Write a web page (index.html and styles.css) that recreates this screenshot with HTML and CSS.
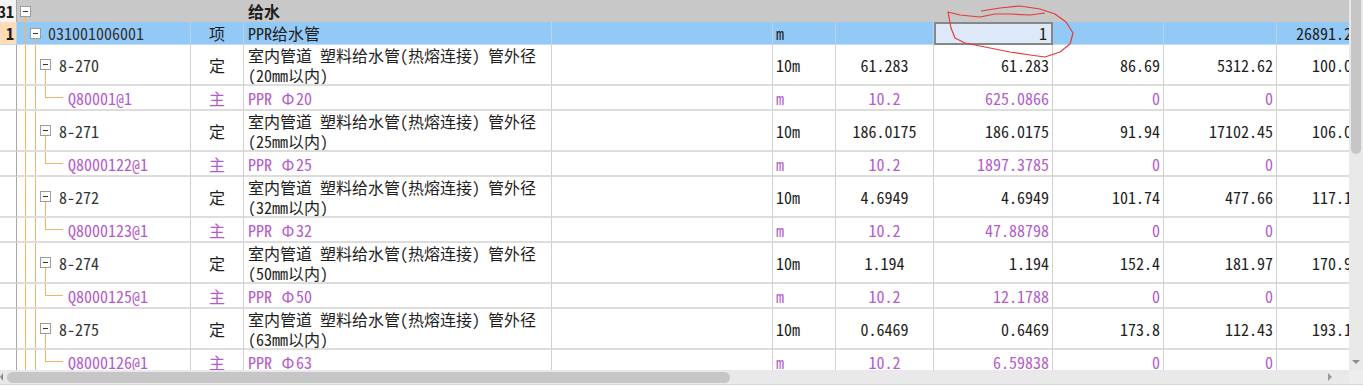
FILE: index.html
```html
<!DOCTYPE html>
<html lang="zh-CN">
<head>
  <meta charset="UTF-8" />
  <title>分部分项</title>
  <link rel="stylesheet" href="styles.css">
</head>
<body>
  <div class="main">
    <div class="sheet">
      <div class="row grp">
        <div class="c num">31</div>
        <div class="c code lv0"><i class="box"></i></div>
        <div class="c"></div>
        <div class="c name bold">给水</div>
        <div class="c"></div><div class="c"></div><div class="c"></div><div class="c"></div><div class="c"></div><div class="c"></div><div class="c"></div>
      </div>

      <div class="row top">
        <div class="c num cur">1</div>
        <div class="c code lv1"><i class="box"></i>031001006001</div>
        <div class="c mid">项</div>
        <div class="c name">PPR给水管</div>
        <div class="c"></div>
        <div class="c">m</div>
        <div class="c"></div>
        <div class="c r edit">1</div>
        <div class="c"></div>
        <div class="c"></div>
        <div class="c r">26891.27</div>
      </div>

      <div class="row def">
        <div class="c num"></div>
        <div class="c code lv2"><i class="box"></i>8-270</div>
        <div class="c mid">定</div>
        <div class="c name">室内管道 塑料给水管(热熔连接) 管外径<br>(20mm以内)</div>
        <div class="c"></div>
        <div class="c">10m</div>
        <div class="c mid">61.283</div>
        <div class="c r">61.283</div>
        <div class="c r">86.69</div>
        <div class="c r">5312.62</div>
        <div class="c r">100.04</div>
      </div>
      <div class="row mat">
        <div class="c num"></div>
        <div class="c code lv3">Q80001@1</div>
        <div class="c mid">主</div>
        <div class="c name">PPR&nbsp;<span class="phi">Φ</span>20</div>
        <div class="c"></div>
        <div class="c">m</div>
        <div class="c mid">10.2</div>
        <div class="c r">625.0866</div>
        <div class="c r">0</div>
        <div class="c r">0</div>
        <div class="c"></div>
      </div>

      <div class="row def">
        <div class="c num"></div>
        <div class="c code lv2"><i class="box"></i>8-271</div>
        <div class="c mid">定</div>
        <div class="c name">室内管道 塑料给水管(热熔连接) 管外径<br>(25mm以内)</div>
        <div class="c"></div>
        <div class="c">10m</div>
        <div class="c mid">186.0175</div>
        <div class="c r">186.0175</div>
        <div class="c r">91.94</div>
        <div class="c r">17102.45</div>
        <div class="c r">106.05</div>
      </div>
      <div class="row mat">
        <div class="c num"></div>
        <div class="c code lv3">Q8000122@1</div>
        <div class="c mid">主</div>
        <div class="c name">PPR&nbsp;<span class="phi">Φ</span>25</div>
        <div class="c"></div>
        <div class="c">m</div>
        <div class="c mid">10.2</div>
        <div class="c r">1897.3785</div>
        <div class="c r">0</div>
        <div class="c r">0</div>
        <div class="c"></div>
      </div>

      <div class="row def">
        <div class="c num"></div>
        <div class="c code lv2"><i class="box"></i>8-272</div>
        <div class="c mid">定</div>
        <div class="c name">室内管道 塑料给水管(热熔连接) 管外径<br>(32mm以内)</div>
        <div class="c"></div>
        <div class="c">10m</div>
        <div class="c mid">4.6949</div>
        <div class="c r">4.6949</div>
        <div class="c r">101.74</div>
        <div class="c r">477.66</div>
        <div class="c r">117.14</div>
      </div>
      <div class="row mat">
        <div class="c num"></div>
        <div class="c code lv3">Q8000123@1</div>
        <div class="c mid">主</div>
        <div class="c name">PPR&nbsp;<span class="phi">Φ</span>32</div>
        <div class="c"></div>
        <div class="c">m</div>
        <div class="c mid">10.2</div>
        <div class="c r">47.88798</div>
        <div class="c r">0</div>
        <div class="c r">0</div>
        <div class="c"></div>
      </div>

      <div class="row def">
        <div class="c num"></div>
        <div class="c code lv2"><i class="box"></i>8-274</div>
        <div class="c mid">定</div>
        <div class="c name">室内管道 塑料给水管(热熔连接) 管外径<br>(50mm以内)</div>
        <div class="c"></div>
        <div class="c">10m</div>
        <div class="c mid">1.194</div>
        <div class="c r">1.194</div>
        <div class="c r">152.4</div>
        <div class="c r">181.97</div>
        <div class="c r">170.96</div>
      </div>
      <div class="row mat">
        <div class="c num"></div>
        <div class="c code lv3">Q8000125@1</div>
        <div class="c mid">主</div>
        <div class="c name">PPR&nbsp;<span class="phi">Φ</span>50</div>
        <div class="c"></div>
        <div class="c">m</div>
        <div class="c mid">10.2</div>
        <div class="c r">12.1788</div>
        <div class="c r">0</div>
        <div class="c r">0</div>
        <div class="c"></div>
      </div>

      <div class="row def">
        <div class="c num"></div>
        <div class="c code lv2"><i class="box"></i>8-275</div>
        <div class="c mid">定</div>
        <div class="c name">室内管道 塑料给水管(热熔连接) 管外径<br>(63mm以内)</div>
        <div class="c"></div>
        <div class="c">10m</div>
        <div class="c mid">0.6469</div>
        <div class="c r">0.6469</div>
        <div class="c r">173.8</div>
        <div class="c r">112.43</div>
        <div class="c r">193.16</div>
      </div>
      <div class="row mat">
        <div class="c num"></div>
        <div class="c code lv3">Q8000126@1</div>
        <div class="c mid">主</div>
        <div class="c name">PPR&nbsp;<span class="phi">Φ</span>63</div>
        <div class="c"></div>
        <div class="c">m</div>
        <div class="c mid">10.2</div>
        <div class="c r">6.59838</div>
        <div class="c r">0</div>
        <div class="c r">0</div>
        <div class="c"></div>
      </div>
    </div>

    <div class="vbar">
      <div class="vthumb"></div>
      <i class="arrow-down"></i>
    </div>
  </div>

  <div class="hbar">
    <i class="arrow-left"></i>
    <div class="hthumb"></div>
    <i class="arrow-right"></i>
    <div class="corner"></div>
  </div>

  <!-- hand-drawn red mark over the quantity cell -->
  <svg class="scribble" width="1363" height="391" viewBox="0 0 1363 391">
    <path d="M981 11 L1000 8 L1020 6 L1040 9 L1055 14 L1066 22 L1073 33 L1070 44 L1060 52 L1045 57 L1030 55 L1010 52 L985 47 L965 43 L955 38 L951 28 L948 12 L960 15 L980 17 L995 14 L1010 14 L1030 15 L1045 13"
          fill="none" stroke="#e53a3a" stroke-width="1.2" stroke-linejoin="round"/>
  </svg>
</body>
</html>
```

FILE: styles.css
```css
body {
  margin: 0;
  background: #fff;
  font-family: "Noto Sans Mono CJK SC", "DejaVu Sans Mono", "Noto Sans CJK SC", monospace;
  font-size: 16px;
  color: #1e1e1e;
  position: relative;
  width: 1363px;
  height: 391px;
  overflow: hidden;
}
.main {
  display: flex;
  height: 370px;
}
.sheet {
  width: 1349px;
  overflow: hidden;
}
.row {
  display: grid;
  grid-template-columns: 17px 174px 53px 308px 221px 63px 98px 119px 111px 113px 87px;
}
.c {
  display: flex;
  align-items: center;
  box-sizing: border-box;
  padding: 0 3px;
  border-right: 1px solid #d0d0d0;
  border-bottom: 2px solid #dddddd;
  white-space: nowrap;
  overflow: hidden;
}
.r {
  justify-content: flex-end;
}
.mid {
  justify-content: center;
}
.name {
  padding-left: 4px;
  line-height: 20px;
}
.phi {
  display: inline-block;
  width: 16px;
  text-align: center;
}
.bold {
  font-weight: bold;
}
.num {
  justify-content: flex-end;
  padding: 0 2px 0 0;
  font-weight: bold;
  border-right-color: #a8a8a8;
  background: #fff;
}
.num.cur {
  background: #fddcb6;
}

/* row kinds */
.grp {
  height: 22px;
  background: #c8c8c8;
}
.grp .c {
  border-bottom: none;
  border-right-color: transparent;
}
.grp .num {
  background: #f4f4f4;
  border-right-color: #a8a8a8;
}
.top {
  height: 23px;
  background: #93c9f6;
}
.top .c {
  border-bottom: 1px solid #c6dcef;
  border-right-color: #b9d3ea;
}
.def {
  height: 41px;
}
.mat {
  height: 25px;
  color: #b45ccc;
}
.mat .code {
  color: #b45ccc;
}
.code {
  color: #333;
  --tl: #f2b466;
}

/* tree connectors */
.lv0 {
  padding-left: 3px;
  background: linear-gradient(var(--tl), var(--tl)) 8px 16px / 1px 100% no-repeat;
}
.lv1 {
  padding-left: 13px;
  background:
    linear-gradient(var(--tl), var(--tl)) 8px 0 / 1px 100% no-repeat,
    linear-gradient(var(--tl), var(--tl)) 18px 17px / 1px 100% no-repeat;
}
.lv1 .box {
  margin-right: 7px;
}
.lv2 {
  padding-left: 23px;
  background:
    linear-gradient(var(--tl), var(--tl)) 8px 0 / 1px 100% no-repeat,
    linear-gradient(var(--tl), var(--tl)) 18px 0 / 1px 100% no-repeat,
    linear-gradient(var(--tl), var(--tl)) 28px 25px / 1px 100% no-repeat;
}
.lv2 .box {
  margin-right: 8px;
}
.lv3 {
  padding-left: 51px;
  background:
    linear-gradient(var(--tl), var(--tl)) 8px 0 / 1px 100% no-repeat,
    linear-gradient(var(--tl), var(--tl)) 18px 0 / 1px 100% no-repeat,
    linear-gradient(var(--tl), var(--tl)) 28px 0 / 1px 12px no-repeat,
    linear-gradient(var(--tl), var(--tl)) 28px 11px / 18px 1px no-repeat;
}
.box {
  position: relative;
  flex: none;
  width: 11px;
  height: 11px;
  box-sizing: border-box;
  border: 1px solid #9c9c9c;
  background: #fff;
}
.box::after {
  content: "";
  position: absolute;
  left: 2px;
  top: 4px;
  width: 5px;
  height: 1px;
  background: #333;
}

.edit {
  background: #dde8f9;
  outline: 2px solid #878787;
  outline-offset: -2px;
  padding-right: 5px;
}

/* scrollbars */
.vbar {
  width: 14px;
  background: #e9e9e9;
  display: flex;
  flex-direction: column;
  align-items: center;
}
.vthumb {
  width: 10px;
  height: 154px;
  background: #c6c6c6;
  border-radius: 0 0 5px 5px;
}
.arrow-down {
  margin-top: auto;
  margin-bottom: 6px;
  border-left: 4px solid transparent;
  border-right: 4px solid transparent;
  border-top: 4px solid #8c8c8c;
}
.hbar {
  display: flex;
  align-items: center;
  height: 14px;
  background: #e9e9e9;
  border-bottom: 1px solid #d6d6d6;
}
.arrow-left {
  border-top: 4px solid transparent;
  border-bottom: 4px solid transparent;
  border-right: 3px solid #8c8c8c;
}
.hthumb {
  margin-left: 4px;
  width: 723px;
  height: 11px;
  border-radius: 6px;
  background: #c6c6c6;
}
.arrow-right {
  margin-left: auto;
  margin-right: 17px;
  border-top: 4px solid transparent;
  border-bottom: 4px solid transparent;
  border-left: 4px solid #9a9a9a;
}
.corner {
  width: 14px;
  height: 14px;
  background: #ededed;
}

.scribble {
  position: absolute;
  left: 0;
  top: 0;
  pointer-events: none;
}
```
